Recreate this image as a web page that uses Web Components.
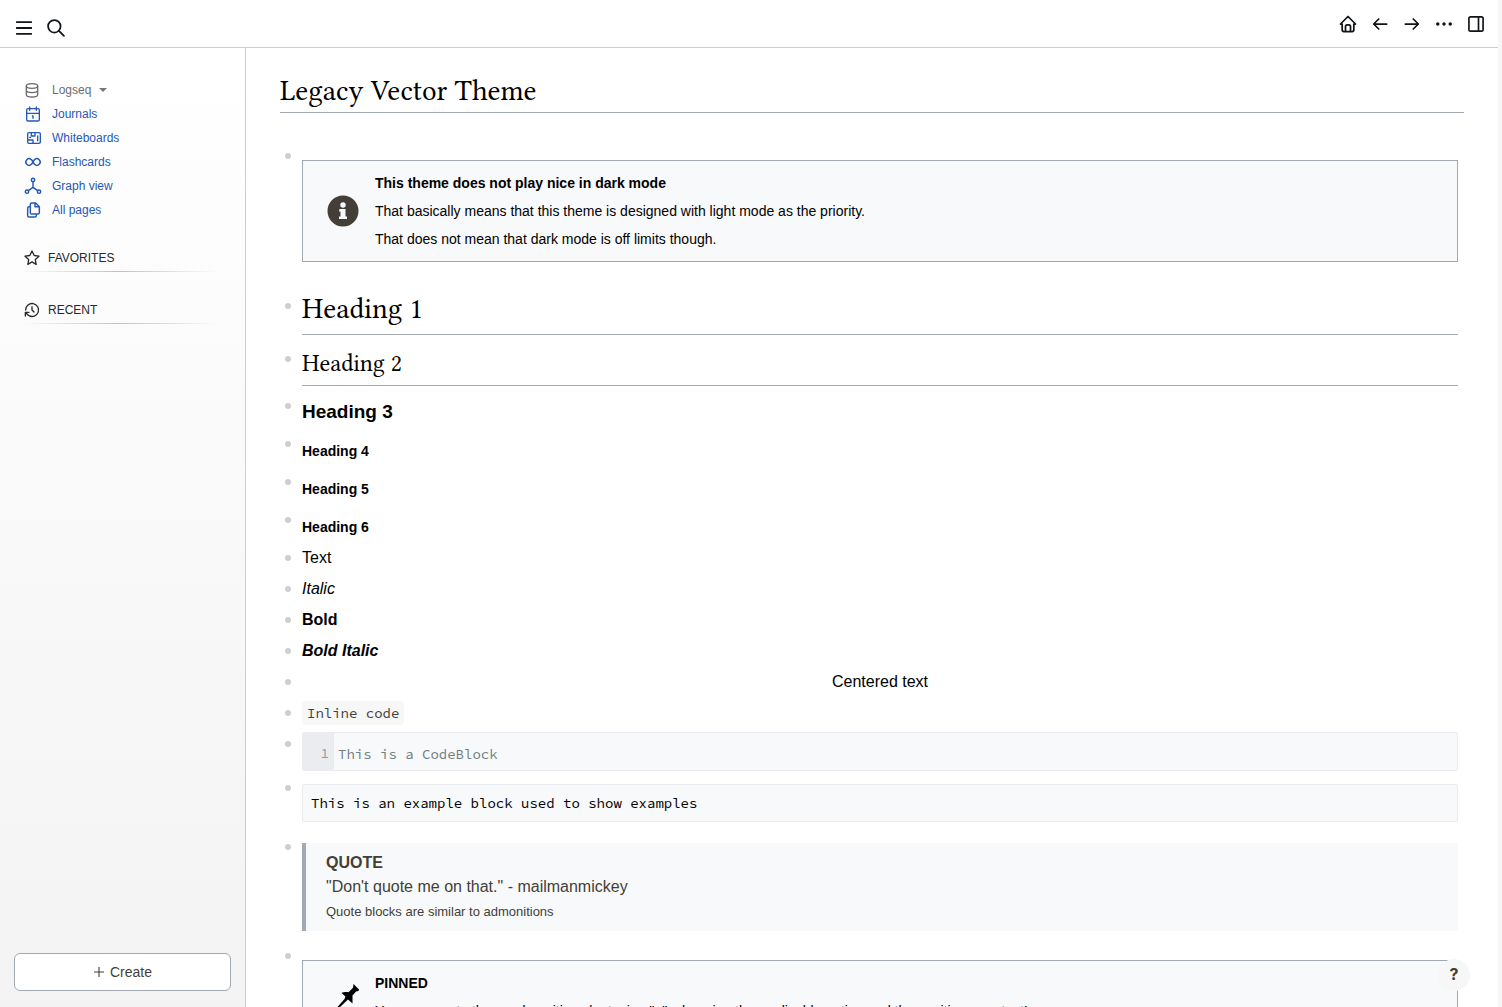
<!DOCTYPE html>
<html lang="en">
<head>
<meta charset="utf-8">
<title>Legacy Vector Theme</title>
<style>
html,body{height:100%;margin:0}
body{font-family:"Liberation Sans",Arial,sans-serif;color:#000;background:#fff;overflow:hidden;--serif:"Linux Libertine","Linux Libertine O","Libertinus Serif","Crimson Text","Crimson Pro","Liberation Serif",serif}
</style>
</head>
<body>
<logseq-app></logseq-app>
<script>
const stroke = (w, body) => `<svg viewBox="0 0 24 24" fill="none" stroke="currentColor" stroke-width="${w}" stroke-linecap="round" stroke-linejoin="round" aria-hidden="true">${body}</svg>`;
const icons = {
  menu: stroke(2.2, '<path d="M2.500 5h19M2.500 12h19M2.500 19h19" stroke-linecap="butt"/>'),
  search: stroke(2.1, '<circle cx="10" cy="10" r="7.500"/><path d="M21.500 21.500l-6-6"/>'),
  home: stroke(2.1, '<path d="M5 12H3l9-9 9 9h-2M5 12v7a2 2 0 0 0 2 2h10a2 2 0 0 0 2-2v-7M9 21v-6a2 2 0 0 1 2-2h2a2 2 0 0 1 2 2v6"/>'),
  left: stroke(2.1, '<path d="M4.500 12h15.500M4.500 12l6 6M4.500 12l6-6"/>'),
  right: stroke(2.1, '<path d="M4 12h15.500M13.500 18l6-6M13.500 6l6 6"/>'),
  dots: '<svg viewBox="0 0 24 24" fill="currentColor" aria-hidden="true"><circle cx="4.500" cy="12" r="2.100"/><circle cx="12" cy="12" r="2.100"/><circle cx="19.500" cy="12" r="2.100"/></svg>',
  panel: stroke(2, '<rect x="3.500" y="3.500" width="17" height="17" rx="2"/><path d="M15 3.500v17"/>'),
  database: stroke(2, '<ellipse cx="12" cy="6" rx="8.500" ry="3.500"/><path d="M3.500 6v6.500c0 2 3.800 3.500 8.500 3.500s8.500-1.500 8.500-3.500V6M3.500 12.500V19c0 2 3.800 3.500 8.500 3.500s8.500-1.500 8.500-3.500v-6.500"/>'),
  calendar: stroke(2, '<rect x="2.500" y="4" width="19" height="18.500" rx="2"/><path d="M7 1.500v5M17 1.500v5M2.500 11h19M11 15h1v3.500"/>'),
  whiteboard: stroke(2, '<rect x="4" y="4" width="19" height="16" rx="2"/><path d="M9.500 4v5H15V4M4 15h8v5M8.500 11H7M19 9v7"/>'),
  infinity: stroke(2.200, '<path d="M9.600 8.500a4.900 4.900 0 1 0 0 7C10.700 14.500 11.300 13.300 12 12c.7-1.300 1.300-2.500 2.400-3.500a4.900 4.900 0 1 1 0 7C13.300 14.500 12.700 13.300 12 12c-.7-1.300-1.300-2.500-2.400-3.500"/>'),
  graph: stroke(2.200, '<circle cx="12" cy="3" r="2.500"/><circle cx="3" cy="20.500" r="2.500"/><circle cx="21" cy="20.500" r="2.500"/><path d="M12 5.500V14M5 19l7-5 7 5"/>'),
  files: stroke(2.200, '<path d="M15 1.500v5.500h6.500M10 1.500h6l5.500 5.500v9a2 2 0 0 1-2 2H10a2 2 0 0 1-2-2V3.500a2 2 0 0 1 2-2M17 18v2.500a2 2 0 0 1-2 2H6a2 2 0 0 1-2-2V9a2 2 0 0 1 2-2h2"/>'),
  star: stroke(2, '<path d="M12 17.800l-6.200 3.700 1.200-7.200-5.500-5 7.200-1L12 1.500l3.300 6.800 7.200 1-5.500 5 1.200 7.200z"/>'),
  history: stroke(2, '<path d="M12 7v5l3 3M2.500 12a9.700 9.700 0 1 1 5 8.500M2 21v-5.500h5.500M2.500 16l4 4"/>'),
  plus: stroke(2.200, '<path d="M12 2v20M2 12h20" stroke-linecap="butt"/>'),
  info: '<svg viewBox="0 0 32 32" aria-hidden="true"><circle cx="16" cy="16" r="15.500" fill="#433f38"/><circle cx="16" cy="10" r="2.700" fill="#f8f9fa"/><path d="M12.500 14h6v7.500h1.500V24h-8v-2.500h1.500v-5h-1.500z" fill="#f8f9fa"/></svg>',
  pin: '<svg viewBox="0 0 32 32" aria-hidden="true"><path d="M26.500 3l5.500 5.500-.500 1.500-2.500.500-3.500 4v8l-4.500-4L12 27l-1.500-1 7-8 1-2.500-4-3.500c2-1 5-1.300 7-.800l4.500-4.500z"/></svg>'
};
function define(name, render){
  customElements.define(name, class extends HTMLElement{
    connectedCallback(){
      if(this.shadowRoot) return;
      this.attachShadow({mode:'open'}).innerHTML = '<style>*{box-sizing:border-box}</style>' + render(this);
    }
  });
}

define('ls-icon', el => `<style>:host{display:block;flex:none;width:var(--size,20px);height:var(--size,20px)}svg{display:block;width:100%;height:100%;overflow:visible}</style>${icons[el.getAttribute('name')]}`);

define('ls-icon-button', el => `<style>
:host{display:block}
button{display:flex;align-items:center;justify-content:center;width:32px;height:32px;padding:0;border:0;background:none;color:#111518}
</style><button aria-label="${el.getAttribute('label')}"><ls-icon name="${el.getAttribute('name')}"></ls-icon></button>`);

define('ls-topbar', () => `<style>
:host{display:block}
header{display:flex;justify-content:space-between;height:48px;padding:0 6px 0 8px;border-bottom:1px solid #a7d7f9;background:#fff}
div{display:flex}
.left{padding-top:12px}.right{padding-top:8px}
</style><header>
<div class="left"><ls-icon-button name="menu" label="Menu"></ls-icon-button><ls-icon-button name="search" label="Search"></ls-icon-button></div>
<div class="right"><ls-icon-button name="home" label="Home"></ls-icon-button><ls-icon-button name="left" label="Back"></ls-icon-button><ls-icon-button name="right" label="Forward"></ls-icon-button><ls-icon-button name="dots" label="More"></ls-icon-button><ls-icon-button name="panel" label="Sidebar"></ls-icon-button></div>
</header>`);

define('ls-nav-item', el => `<style>
:host{display:block;--size:16px;color:#2558b4}
a{display:flex;align-items:center;gap:11px;height:24px;padding-left:25px;color:inherit;text-decoration:none;font-size:12px}
</style><a href="#"><ls-icon name="${el.getAttribute('icon')}"></ls-icon><span><slot></slot></span></a>`);

define('ls-graph-picker', () => `<style>
:host{display:block;--size:16px}
button{display:flex;align-items:center;height:24px;padding:0 0 0 24px;border:0;background:none;color:#6b6d70;font:12px "Liberation Sans",sans-serif}
span{margin-left:12px}
i{margin-left:8px;border:4px solid transparent;border-top-color:#72777d;border-bottom:0}
</style><button><ls-icon name="database"></ls-icon><span>Logseq</span><i></i></button>`);

define('ls-nav-section', el => `<style>
:host{display:block;--size:16px}
h2{display:flex;align-items:center;gap:8px;height:28px;margin:0 30px 0 24px;padding:0;font-size:12px;font-weight:400;color:#26292d;border-bottom:1px solid;border-image:linear-gradient(90deg,transparent,#c0c0c0 50%,transparent) 1}
</style><h2><ls-icon name="${el.getAttribute('icon')}"></ls-icon><slot></slot></h2>`);

define('ls-sidebar', () => `<style>
:host{display:flex;flex-direction:column;justify-content:space-between;width:246px;flex:none;border-right:1px solid #a7d7f9;background:linear-gradient(#fff,#f3f3f3)}
nav{padding-top:30px}
.sections{display:grid;gap:24px;padding-top:22px}
.foot{padding:14px 14px 16px}
.create{display:flex;align-items:center;justify-content:center;gap:5px;width:100%;height:38px;border:1px solid #a2a9b1;border-radius:6px;background:#fff;color:#433f38;font:14px "Liberation Sans",sans-serif;--size:12px}
</style>
<nav><ls-graph-picker></ls-graph-picker>
<ls-nav-item icon="calendar">Journals</ls-nav-item>
<ls-nav-item icon="whiteboard">Whiteboards</ls-nav-item>
<ls-nav-item icon="infinity">Flashcards</ls-nav-item>
<ls-nav-item icon="graph">Graph view</ls-nav-item>
<ls-nav-item icon="files">All pages</ls-nav-item>
<div class="sections"><ls-nav-section icon="star">FAVORITES</ls-nav-section><ls-nav-section icon="history">RECENT</ls-nav-section></div></nav>
<div class="foot"><button class="create"><ls-icon name="plus"></ls-icon>Create</button></div>`);

define('ls-block', () => `<style>
:host{display:flex;align-items:flex-start;gap:11px;padding:0 6px 0 5px}
i{flex:none;width:6px;height:6px;margin-top:var(--dot,9px);border-radius:50%;background:#cecece}
div{flex:1;min-width:0}
</style><i></i><div><slot></slot></div>`);

define('ls-heading', el => {
  const n = el.getAttribute('level');
  return `<style>
:host{display:block}
h1,h2,h3,h4,h5,h6{margin:0;font-size:14px;line-height:24px;padding:7px 0}
h1,h2{font-family:var(--serif);font-weight:400;border-bottom:1px solid #a2a9b1}
h1{font-size:29px;line-height:40px;padding:0 0 5px}
h2{font-size:24px;line-height:38px;padding:0 0 2px}
h3{font-size:19px;line-height:28px;padding:0}
</style><h${n}><slot></slot></h${n}>`;
});

define('ls-admonition', el => `<style>
:host{display:block}
section{display:flex;align-items:center;gap:16px;padding:8px 24px;border:1px solid #a2a9b1;background:#f8f9fa;--size:32px;font-size:14px;line-height:28px}
</style><section><ls-icon name="${el.getAttribute('icon')}"></ls-icon><div><slot></slot></div></section>`);

define('ls-quote', () => `<style>
:host{display:block;border-left:4px solid #a2a9b1;background:#f8f9fa;color:#433f38;padding:8px 20px 6px;font-size:16px;line-height:24px}
blockquote{margin:0}
</style><blockquote><slot></slot></blockquote>`);

define('ls-inline-code', () => `<style>
:host{display:block;width:fit-content}
code{display:block;padding:0 5px;border-radius:4px;background:#f7f7f7;color:#433f38;font:14px/24px "Source Code Pro","Liberation Mono",monospace}
</style><code><slot></slot></code>`);

define('ls-code', el => `<style>
:host{display:block}
pre{display:flex;margin:0;border:1px solid #eaecf0;border-radius:2px;background:#f8f9fa;font:14px/36px "Source Code Pro","Liberation Mono",monospace;color:#000}
code{font:inherit;padding:0 8px}
.n{width:31px;padding:3px 5px 0 0;line-height:34px;text-align:right;background:#eaecf0;color:#999}
.n + code{padding:5px 4px 0;line-height:32px;color:#708080}
</style><pre>${el.hasAttribute('line') ? `<span class="n">${el.getAttribute('line')}</span>` : ''}<code><slot></slot></code></pre>`);

define('ls-page', () => `<style>
:host{display:block;flex:1;min-width:0;overflow:hidden;padding:24px 34px 0}
.title{margin:0 0 38px;font:29px/38px var(--serif);border-bottom:1px solid #a2a9b1;padding:0 0 2px}
.lig{font-variant-ligatures:common-ligatures discretionary-ligatures}
.blocks{display:grid;grid-template-columns:minmax(0,1fr)}
.t{font-size:16px;line-height:24px;padding-bottom:7px}
.c{text-align:center}
p{margin:0}
small{display:block;font-size:13px;line-height:26px}
.adm{--dot:2px;padding-top:0}
.adm ls-admonition{margin-top:9px}
</style>
<h1 class="title">Legacy Vector <span class="lig">Theme</span></h1>
<div class="blocks">
<ls-block class="adm" style="margin-bottom:27px"><ls-admonition icon="info"><b>This theme does not play nice in dark mode</b><p>That basically means that this theme is designed with light mode as the priority.</p><p>That does not mean that dark mode is off limits though.</p></ls-admonition></ls-block>
<ls-block style="--dot:14px;margin-bottom:10px"><ls-heading level="1">Heading 1</ls-heading></ls-block>
<ls-block style="--dot:11px;margin-bottom:12px"><ls-heading level="2">Heading 2</ls-heading></ls-block>
<ls-block style="--dot:5px;margin-bottom:6px"><ls-heading level="3">Heading 3</ls-heading></ls-block>
<ls-block><ls-heading level="4">Heading 4</ls-heading></ls-block>
<ls-block><ls-heading level="5">Heading 5</ls-heading></ls-block>
<ls-block><ls-heading level="6">Heading 6</ls-heading></ls-block>
<ls-block class="t">Text</ls-block>
<ls-block class="t"><em>Italic</em></ls-block>
<ls-block class="t"><b>Bold</b></ls-block>
<ls-block class="t"><b><em>Bold Italic</em></b></ls-block>
<ls-block class="t c">Centered text</ls-block>
<ls-block class="t"><ls-inline-code>Inline code</ls-inline-code></ls-block>
<ls-block style="margin-bottom:13px"><ls-code line="1">This is a CodeBlock</ls-code></ls-block>
<ls-block style="--dot:1px;margin-bottom:21px"><ls-code>This is an example block used to show examples</ls-code></ls-block>
<ls-block style="--dot:1px;margin-bottom:20px"><ls-quote><b>QUOTE</b><p>"Don't quote me on that." - mailmanmickey</p><small>Quote blocks are similar to admonitions</small></ls-quote></ls-block>
<ls-block class="adm"><ls-admonition icon="pin"><b>PINNED</b><p>You can create these admonitions by typing "&lt;", choosing the applicable option and then writing your text!</p></ls-admonition></ls-block>
</div>`);

define('logseq-app', () => `<style>
:host{display:flex;flex-direction:column;height:100vh;border-right:4px solid #f7f7f7}
main{display:flex;flex:1;min-height:0}
.help{position:absolute;right:32px;bottom:16px;width:32px;height:32px;padding:0 0 2px;border:0;border-radius:50%;background:#f7f7f7;color:#433f38;font:bold 16px Inter,sans-serif}
</style><ls-topbar></ls-topbar><main><ls-sidebar></ls-sidebar><ls-page></ls-page></main><button class="help">?</button>`);
</script>
</body>
</html>
